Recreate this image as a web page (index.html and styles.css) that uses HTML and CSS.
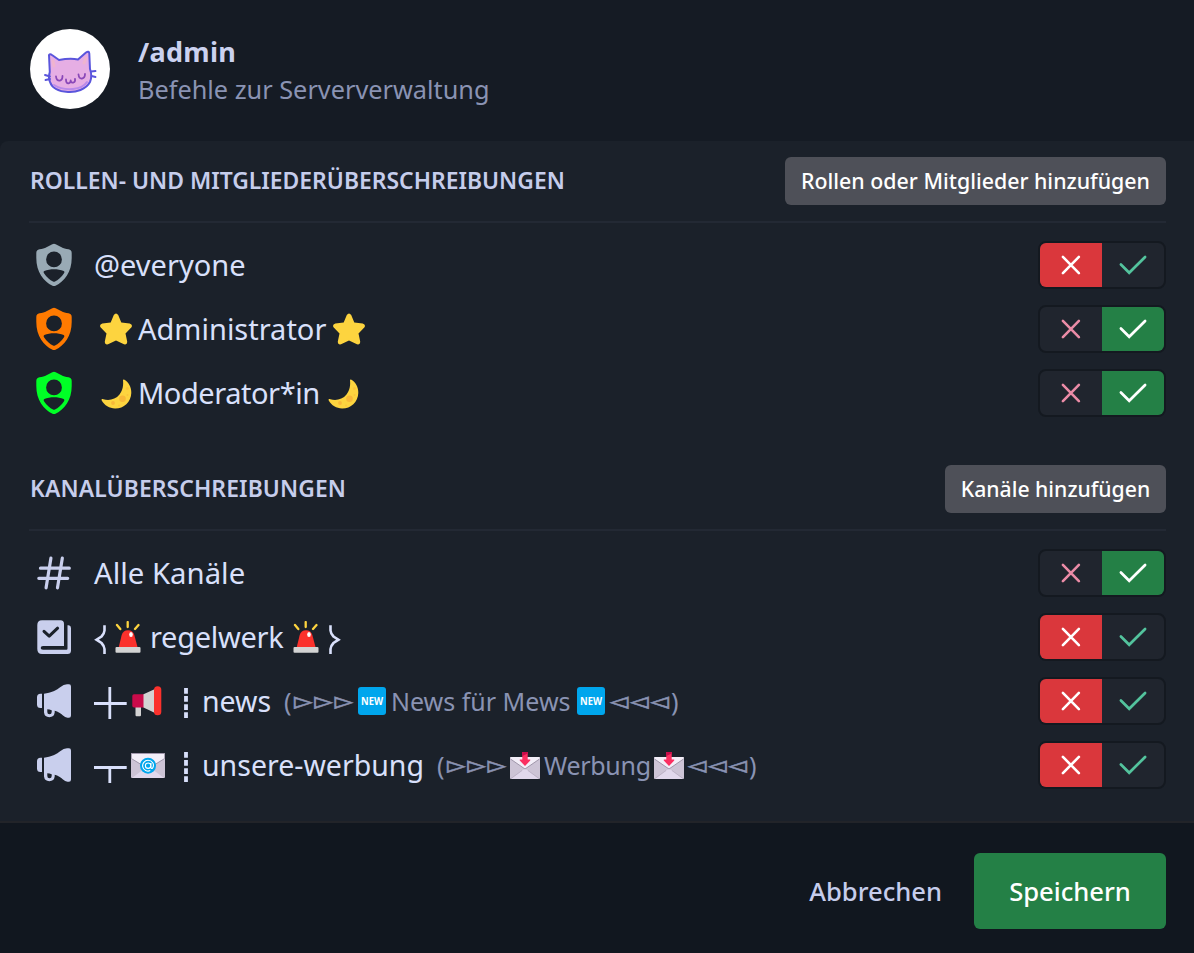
FILE: index.html
```
<!DOCTYPE html>
<html lang="de">
<head>
<meta charset="utf-8">
<title>/admin</title>
<link rel="stylesheet" href="styles.css">
</head>
<body>
<svg class="defs" aria-hidden="true">
  <symbol id="shield" viewBox="0 0 48 48"><path fill="currentColor" fill-rule="evenodd" d="M22.300 3.200Q24 2.400 25.700 3.200L33 7Q34.500 7.700 36.500 7.900L38.500 8.200Q41.700 8.800 41.700 12V17C41.700 31 34.500 40.500 25.500 44.700Q24 45.300 22.500 44.700C13.500 40.500 6.300 31 6.300 17V12Q6.300 8.800 9.500 8.200L11.500 7.900Q13.500 7.700 15 7ZM24 10.500A7.900 7.900 0 1 0 24 26.300A7.900 7.900 0 1 0 24 10.500ZM14.300 30Q13 30.700 14 32.200C16.500 36 20 39 23 40.500Q24 40.900 25 40.500C28 39 31.500 36 34 32.200Q35 30.700 33.700 30C28 27.600 20 27.600 14.300 30Z"/></symbol>
  <symbol id="hash" viewBox="0 0 48 48"><path fill="none" stroke="currentColor" stroke-width="3.200" stroke-linecap="round" d="M10.500 19.200H39.300M8.800 29.300H37.700M20.900 9.200L16.100 38.800M32.300 9.200L27.500 38.800"/></symbol>
  <symbol id="rules" viewBox="0 0 48 48"><path fill="currentColor" fill-rule="evenodd" d="M12 7.300H30.500Q34 7.300 34 11V33H13Q10.700 33 10.700 34.900Q10.700 36.700 13 36.700H36.500Q37.500 36.700 37.500 35.500V12.300H38.500Q41 12.600 41 15V37.500Q41 41 37.500 41H12Q7.300 41 7.300 36V12Q7.300 7.300 12 7.300Z"/><path fill="none" stroke="#1b212a" stroke-width="3" stroke-linecap="round" stroke-linejoin="round" d="M14 18.300L19.200 23.200L27.600 15.200"/></symbol>
  <symbol id="announce" viewBox="0 0 48 48"><path fill="currentColor" fill-rule="evenodd" d="M12 16.700V31H10.500Q7 31 7 27.500V20.200Q7 16.700 10.500 16.700ZM14 16.700C21 16 27 13 30.500 10Q33.500 7.400 37 7.300H39Q41 7.300 41 9.500V38.500Q41 40.700 39 40.700H37.500Q35 40.500 33 38.500C31 36.500 28 34.500 24.700 33.700V35.500A5.400 5.400 0 0 1 14 35.500ZM17.300 32.300V35A2.200 2.200 0 0 0 21.700 35V33.200Q19.500 32.500 17.300 32.300Z"/></symbol>
  <symbol id="cross" viewBox="0 0 62 44"><path fill="none" stroke="currentColor" stroke-width="2.600" stroke-linecap="round" d="M22.900 13.900L38.900 30.100M38.900 13.900L22.900 30.100"/></symbol>
  <symbol id="check" viewBox="0 0 62 44"><path fill="none" stroke="currentColor" stroke-width="2.700" stroke-linecap="round" d="M18.900 21.500L27.200 29.800L43.100 14"/></symbol>
  <symbol id="star" viewBox="0 0 32 32"><path fill="#fdd43f" d="M13.800 2Q16-1 18.200 2L21.300 9.500L29.700 10.500Q33 11.500 31.500 14.300L25.500 20.500L27.200 28.500Q27.200 32 24 31.300L16 27.500L8 31.300Q4.800 32 4.800 28.500L6.500 20.500L.5 14.300Q-1 11.500 2.300 10.500L10.700 9.500Z"/></symbol>
  <symbol id="moon" viewBox="0 0 31 30"><path fill="#fdd43f" d="M23 .5C27.500 3 30.500 8 30.300 14C30 23.500 22.500 29.700 14 29.500C8.500 29.300 3.500 26.500.7 21.500C.3 20.300 1 19.800 2.300 20.200C8 22 14.500 20.500 18.500 15.500C22 11 22.500 6 22 1.300Q22 .2 23 .5Z"/><circle cx="21.500" cy="19.700" r="3.300" fill="#f8b839"/><circle cx="12" cy="24" r="1.900" fill="#f8b839"/><circle cx="26.300" cy="9.500" r="1.500" fill="#fbc43c"/><circle cx="18" cy="26.500" r=".9" fill="#fbc43c"/><circle cx="26.500" cy="16" r="1" fill="#fbc43c"/></symbol>
  <symbol id="siren" viewBox="0 0 26 32"><path d="M2 4L5.300 8M12.700 1V6M23.500 4L20 8" fill="none" stroke="#fdd43f" stroke-width="2.300" stroke-linecap="round"/><path fill="#fb312c" d="M3.800 26L6.700 14Q8 9.300 13 9.300Q18 9.300 19.300 14L22.500 26Z"/><ellipse cx="16" cy="13.500" rx="1.800" ry="2.500" fill="#fff"/><rect x=".5" y="26" width="25" height="5.800" rx="1" fill="#d3d3d3"/></symbol>
  <symbol id="horn" viewBox="0 0 30 31"><path fill="#d3d3d3" d="M3.500 20H9V29Q9 30.300 8 30.300H4.500Q3.500 30.300 3.500 29Z"/><path fill="#ca0b4a" d="M12 8.300H2Q.3 8.300.3 10V19.800Q.3 21.500 2 21.500H12Z"/><path fill="#d3d3d3" d="M11.500 8.300L23 3V27L11.500 21.500Z"/><rect x="22" y=".3" width="7.300" height="29" rx="3.600" fill="#fb312c"/></symbol>
  <symbol id="newbadge" viewBox="0 0 28 28"><rect width="28" height="28" rx="3" fill="#00a6ed"/><text x="14" y="17.800" text-anchor="middle" textLength="22" lengthAdjust="spacingAndGlyphs" class="newtext">NEW</text></symbol>
  <symbol id="mail" viewBox="0 0 34 25"><rect width="34" height="25" rx="1" fill="#cdc4d6"/><path fill="#e1d8ec" d="M1 25L17 13L33 25Z"/><path fill="#f3eef8" stroke="#998ea4" stroke-width=".9" d="M.3.5H33.700V5.500L19 14.500Q17 15.700 15 14.500L.3 5.500Z"/><circle cx="17" cy="12.700" r="8" fill="#00a6ed"/><path d="M20 10V14.500Q20.200 16 21.500 15.200C24 11 21 7.300 17 7.300A5.400 5.400 0 1 0 19.300 17.600M19.800 12.700A2.700 2.700 0 1 1 14.400 12.700A2.700 2.700 0 1 1 19.800 12.700" fill="none" stroke="#fff" stroke-width="1.100"/></symbol>
  <symbol id="inbox" viewBox="0 0 30 27"><rect y="5" width="30" height="22" rx="1" fill="#cdc4d6"/><path fill="#e1d8ec" d="M1 27L15 16.500L29 27Z"/><path fill="#f3eef8" d="M.5 5H29.500V7L15 17L.5 7Z"/><path fill="none" stroke="#998ea4" stroke-width=".9" d="M.5 7L15 17L29.500 7"/><path fill="none" stroke="#b4abbf" stroke-width=".7" d="M1 26.500L12 18.500M29 26.500L18 18.500"/><path fill="#fb2f61" d="M12.300 0H17.700V7.500H20Q20.700 8 20 8.800L15 14L10 8.800Q9.300 8 10 7.500H12.300Z"/><path fill="#ca0b4a" d="M12.300 0H17.700V1.500L12.300 4Z"/></symbol>
  <symbol id="brace" viewBox="0 0 12 30"><path fill="none" stroke="currentColor" stroke-width="2.600" d="M10.500.3V5.500Q10.300 8.500 7.500 11.500L2.500 14.700L7.500 18Q10.300 21 10.500 24V29"/></symbol>
  <symbol id="dashes" viewBox="0 0 4 30"><path fill="none" stroke="currentColor" stroke-width="3.800" stroke-dasharray="5.800 2.270" d="M2 0V30"/></symbol>
  <symbol id="cat" viewBox="0 0 80 80"><g fill="none" stroke="#5a55dc" stroke-linecap="round" stroke-linejoin="round"><path fill="#e6aee4" stroke-width="2" d="M19.800 43L19 26Q20 24.500 22 26L29 31Q40 29 48 30.500L56 23.500Q59 21.500 59.300 24.500L60 40Q62.500 47 60 53C56 60.500 46 63.500 38 63C29 62.500 22 59 20 53Q18 48 19.800 43Z"/><path stroke="#efb4cf" stroke-width="3" d="M24 37L23 32M54 34L56 29"/><path stroke="#b98aea" stroke-width="2" d="M24 56Q32 61 43 60Q53 59 57 53"/><path stroke-width="1.900" d="M15 46L20 47.500M15.500 51L20 50M61 42.500L65.500 42M61.500 47L65.500 48"/><path stroke="#8a48b8" stroke-width="1.800" d="M26 47.500Q26.500 52 30 51.500Q32.500 51 32.500 47M48.500 45.500Q49 50 52 49.500Q55 49 55 45M36 50.500Q36 54.500 38.500 54.300Q40.700 54 40.700 51.500Q41 54 43.500 53.500Q45.500 53 45 50"/></g></symbol>
</svg>

<header class="head">
  <div class="avatar"><svg><use href="#cat"/></svg></div>
  <div class="title">
    <h1>/admin</h1>
    <p>Befehle zur Serververwaltung</p>
  </div>
</header>

<main class="body">
  <section class="group">
    <div class="group-head">
      <h2>ROLLEN- UND MITGLIEDERÜBERSCHREIBUNGEN</h2>
      <button class="add">Rollen oder Mitglieder hinzufügen</button>
    </div>
    <div class="row">
      <svg class="icon grey"><use href="#shield"/></svg>
      <div class="name"><span>@everyone</span></div>
      <div class="toggle"><button class="no on"><svg><use href="#cross"/></svg></button><button class="yes"><svg><use href="#check"/></svg></button></div>
    </div>
    <div class="row">
      <svg class="icon orange"><use href="#shield"/></svg>
      <div class="name"><svg class="star"><use href="#star"/></svg><span class="role-admin">Administrator</span><svg class="star"><use href="#star"/></svg></div>
      <div class="toggle"><button class="no"><svg><use href="#cross"/></svg></button><button class="yes on"><svg><use href="#check"/></svg></button></div>
    </div>
    <div class="row">
      <svg class="icon green"><use href="#shield"/></svg>
      <div class="name"><svg class="moon"><use href="#moon"/></svg><span class="role-mod">Moderator*in</span><svg class="moon"><use href="#moon"/></svg></div>
      <div class="toggle"><button class="no"><svg><use href="#cross"/></svg></button><button class="yes on"><svg><use href="#check"/></svg></button></div>
    </div>
  </section>

  <section class="group">
    <div class="group-head">
      <h2 class="wide">KANALÜBERSCHREIBUNGEN</h2>
      <button class="add narrow">Kanäle hinzufügen</button>
    </div>
    <div class="row">
      <svg class="icon"><use href="#hash"/></svg>
      <div class="name"><span class="chan-all">Alle Kanäle</span></div>
      <div class="toggle"><button class="no"><svg><use href="#cross"/></svg></button><button class="yes on"><svg><use href="#check"/></svg></button></div>
    </div>
    <div class="row">
      <svg class="icon"><use href="#rules"/></svg>
      <div class="name"><svg class="brace"><use href="#brace"/></svg><svg class="siren"><use href="#siren"/></svg><span class="chan-rules">regelwerk</span><svg class="siren"><use href="#siren"/></svg><svg class="brace close"><use href="#brace"/></svg></div>
      <div class="toggle"><button class="no on"><svg><use href="#cross"/></svg></button><button class="yes"><svg><use href="#check"/></svg></button></div>
    </div>
    <div class="row">
      <svg class="icon"><use href="#announce"/></svg>
      <div class="name"><svg class="branch" viewBox="0 0 33 48"><path d="M0 26.500H32.700M15.800 10V42"/></svg><svg class="horn"><use href="#horn"/></svg><svg class="dashes"><use href="#dashes"/></svg><span class="chan chan-news">news</span>
        <div class="topic"><span class="open">(</span><span class="tri">▻▻▻</span><svg class="newbadge"><use href="#newbadge"/></svg><span class="topic-news">News für Mews</span><svg class="newbadge"><use href="#newbadge"/></svg><span class="tri left">◅◅◅</span><span>)</span></div>
      </div>
      <div class="toggle"><button class="no on"><svg><use href="#cross"/></svg></button><button class="yes"><svg><use href="#check"/></svg></button></div>
    </div>
    <div class="row">
      <svg class="icon"><use href="#announce"/></svg>
      <div class="name"><svg class="branch" viewBox="0 0 33 48"><path d="M0 26.500H32.700M15.800 26.500V42"/></svg><svg class="mail"><use href="#mail"/></svg><svg class="dashes"><use href="#dashes"/></svg><span class="chan chan-ads">unsere-werbung</span>
        <div class="topic"><span class="open">(</span><span class="tri">▻▻▻</span><svg class="inbox"><use href="#inbox"/></svg><span class="topic-ads">Werbung</span><svg class="inbox"><use href="#inbox"/></svg><span class="tri left">◅◅◅</span><span>)</span></div>
      </div>
      <div class="toggle"><button class="no on"><svg><use href="#cross"/></svg></button><button class="yes"><svg><use href="#check"/></svg></button></div>
    </div>
  </section>
</main>

<footer class="foot">
  <button class="cancel">Abbrechen</button>
  <button class="save">Speichern</button>
</footer>
</body>
</html>
```
FILE: styles.css
```
* { box-sizing: border-box; }
html, body { height: 100%; }
body {
  margin: 0;
  display: flex;
  flex-direction: column;
  background: #151b24;
  color: #d9e0fb;
  font-family: "Noto Sans", "Open Sans", sans-serif;
}
h1, h2, p { margin: 0; }
button { border: 0; padding: 0; margin: 0; background: none; font-family: inherit; color: inherit; white-space: nowrap; }
svg { display: block; flex: none; overflow: visible; }
.defs { position: absolute; width: 0; height: 0; }

.head { flex: none; height: 141px; display: flex; gap: 28px; padding: 29px 30px 0; }
.avatar { width: 80px; height: 80px; border-radius: 50%; background: #fff; overflow: hidden; }
.avatar svg { width: 80px; height: 80px; }
.title { padding-top: 4px; }
.title h1 { font-size: 27px; font-weight: 700; line-height: 37px; letter-spacing: .3px; color: #cbd2f0; }
.title p { font-size: 25.3px; line-height: 38px; color: #8a93b3; }

.body { flex: none; height: 682px; padding: 16px 28px 0 30px; background: #1b212a; border-radius: 8px 0 0 0; border-bottom: 2px solid #222429; }
.group { margin-bottom: 40px; }
.group-head { height: 66px; margin: 0 0 10px -1px; padding-left: 1px; border-bottom: 2px solid #232934; display: flex; justify-content: space-between; align-items: flex-start; }
.group-head h2 { font-size: 22.9px; font-weight: 600; line-height: 48px; color: #c6cdec; white-space: nowrap; }
.group-head h2.wide { letter-spacing: .1px; }
.add { width: 381px; height: 48px; border-radius: 6px; background: #4e5058; color: #fff; font-size: 21.35px; font-weight: 500; line-height: 48px; }
.add.narrow { width: 221px; font-size: 21.2px; }

.row { height: 64px; display: flex; align-items: center; }
.icon { width: 48px; height: 48px; margin-right: 16px; color: #c9cfed; }
.icon.grey { color: #99aab5; }
.icon.orange { color: #ff7a00; }
.icon.green { color: #00ff26; }
.name { flex: 1; display: flex; align-items: center; font-size: 29px; line-height: 48px; white-space: nowrap; }

.star { width: 32px; height: 32px; margin: 0 6px; }
.role-admin { width: 189px; }
.moon { width: 31px; height: 30px; margin: 2px 6px 0 7px; }
.role-mod { width: 183px; letter-spacing: -.45px; }

.chan-all { font-size: 29.3px; }
.brace { width: 12px; height: 30px; margin: 6px 9px 0 0; }
.brace.close { transform: scaleX(-1); margin: 6px 0 0 10px; }
.siren { width: 26px; height: 32px; }
.chan-rules { width: 143px; margin-left: 9px; letter-spacing: -.3px; }

.branch { width: 33px; height: 48px; fill: none; stroke: currentColor; stroke-width: 2.800; }
.horn { width: 30px; height: 31px; margin: 0 22px 0 5px; }
.mail { width: 34px; height: 25px; margin: 0 19px 0 4px; }
.dashes { width: 4px; height: 30px; margin: 4px 14px 0 0; }
.chan { font-size: 28.5px; font-weight: 450; }
.chan-news { width: 82px; }
.chan-ads { width: 235px; }
.topic { display: flex; align-items: center; font-size: 25px; color: #8a93b3; }
.open { width: 10px; }
.tri { width: 59px; font-family: "DejaVu Sans", sans-serif; font-size: 24px; letter-spacing: 1.800px; line-height: 48px; -webkit-text-stroke: .6px currentColor; }
.tri.left { width: 61px; }
.newbadge { width: 28px; height: 28px; margin: 0 5px; }
.newtext { font: 700 9.800px "Noto Sans", sans-serif; fill: #fff; }
.topic-news { width: 181px; }
.inbox { width: 30px; height: 27px; margin: 0 4px; }
.topic-ads { width: 106px; letter-spacing: -.3px; }

.toggle { width: 128px; height: 48px; display: flex; border: 2px solid #141920; border-radius: 8px; overflow: hidden; background: #20252e; }
.toggle button { width: 62px; height: 44px; }
.toggle svg { width: 62px; height: 44px; }
.no { color: #ea8ba6; }
.yes { color: #53c39d; }
.no.on { background: #da373c; color: #fff; }
.yes.on { background: #248046; color: #fff; }

.foot { flex: 1; display: flex; justify-content: flex-end; align-items: flex-start; gap: 32px; padding: 30px 28px 0 0; background: #11171f; }
.foot button { height: 76px; font-size: 25.600px; font-weight: 500; }
.cancel { color: #c6cdec; }
.save { width: 192px; border-radius: 6px; background: #248046; color: #fff; }
```
